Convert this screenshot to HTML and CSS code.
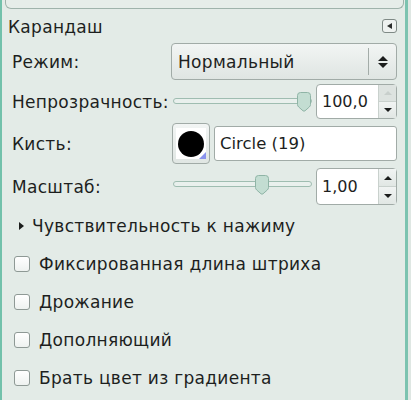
FILE: index.html
```html
<!DOCTYPE html>
<html lang="ru">
<head>
<meta charset="utf-8">
<link rel="stylesheet" href="styles.css">
</head>
<body>
<div class="panel">
  <div class="prev-frame"></div>
  <div class="title-row">
    <span class="title">Карандаш</span>
    <span class="menu-btn"><span class="tri-left"></span></span>
  </div>
  <div class="form">
    <div class="label">Режим:</div>
    <div class="combo">
      <span class="combo-text">Нормальный</span>
      <span class="combo-sep"></span>
      <span class="combo-arrows"><span class="tri-up"></span><span class="tri-down"></span></span>
    </div>

    <div class="label">Непрозрачность:</div>
    <div class="slider-row">
      <div class="slider">
        <div class="track"></div>
        <svg class="handle" style="left: 124px" width="14" height="20" viewBox="0 0 14 20"><path d="M3.5 0.5 H10.5 Q13.5 0.5 13.5 3.5 V12.5 Q13.5 14 12.3 15 L8 18.8 Q7 19.5 6 18.8 L1.7 15 Q0.5 14 0.5 12.5 V3.5 Q0.5 0.5 3.5 0.5 Z" fill="#c3ddd2" stroke="#8fb4a6"/></svg>
      </div>
      <div class="spin">
        <span class="spin-text">100,0</span>
        <span class="spin-btns">
          <span class="spin-btn disabled"><span class="tri-up small"></span></span>
          <span class="spin-btn"><span class="tri-down small"></span></span>
        </span>
      </div>
    </div>

    <div class="label">Кисть:</div>
    <div class="brush-row">
      <div class="brush-btn">
        <div class="brush-preview">
          <div class="brush-dot"></div>
          <div class="brush-corner"></div>
        </div>
      </div>
      <div class="entry">Circle (19)</div>
    </div>

    <div class="label">Масштаб:</div>
    <div class="slider-row scale-row">
      <div class="slider">
        <div class="track"></div>
        <svg class="handle" style="left: 82px" width="14" height="20" viewBox="0 0 14 20"><path d="M3.5 0.5 H10.5 Q13.5 0.5 13.5 3.5 V12.5 Q13.5 14 12.3 15 L8 18.8 Q7 19.5 6 18.8 L1.7 15 Q0.5 14 0.5 12.5 V3.5 Q0.5 0.5 3.5 0.5 Z" fill="#c3ddd2" stroke="#8fb4a6"/></svg>
      </div>
      <div class="spin">
        <span class="spin-text">1,00</span>
        <span class="spin-btns">
          <span class="spin-btn"><span class="tri-up small"></span></span>
          <span class="spin-btn"><span class="tri-down small"></span></span>
        </span>
      </div>
    </div>
  </div>

  <div class="opt-row expander"><span class="tri-right"></span><span>Чувствительность к нажиму</span></div>
  <div class="opt-row"><span class="check"></span><span>Фиксированная длина штриха</span></div>
  <div class="opt-row"><span class="check"></span><span>Дрожание</span></div>
  <div class="opt-row"><span class="check"></span><span>Дополняющий</span></div>
  <div class="opt-row"><span class="check"></span><span>Брать цвет из градиента</span></div>
</div>
</body>
</html>
```
FILE: styles.css
```css
html, body {
  margin: 0;
  padding: 0;
  background: #dfe7e3;
}
body {
  font-family: "DejaVu Sans", sans-serif;
  font-size: 17px;
  letter-spacing: 0.3px;
  color: #1d1f1e;
}
.panel {
  box-sizing: border-box;
  width: 408px;
  height: 400px;
  background: #e3ebe7;
  border-left: 2px solid #72c1ab;
  border-right: 3px solid #7cc3b0;
  overflow: hidden;
}
.prev-frame {
  box-sizing: border-box;
  height: 9px;
  margin: 0 1px 0 3px;
  border: 1px solid #9fb3ab;
  border-top: none;
  border-radius: 0 0 6px 6px;
  background: #e6ede9;
}
.title-row {
  height: 34px;
  display: flex;
  align-items: center;
  justify-content: space-between;
  padding: 0 8px 0 6px;
}
.title {
  margin-top: 1px;
}
.menu-btn {
  box-sizing: border-box;
  width: 15px;
  height: 14px;
  border: 1px solid #7f8a86;
  border-radius: 3px;
  background: #eef2f0;
  display: flex;
  align-items: center;
  justify-content: center;
}
.tri-left {
  width: 0; height: 0;
  border-top: 3.5px solid transparent;
  border-bottom: 3.5px solid transparent;
  border-right: 5px solid #2a2d2c;
  margin-left: -1px;
}
.form {
  display: grid;
  grid-template-columns: 159px 226px;
  grid-template-rows: 37px 35px 41px 37px;
  row-gap: 4px;
  padding-left: 10px;
}
.label {
  display: flex;
  align-items: center;
  white-space: nowrap;
}
.combo {
  box-sizing: border-box;
  border: 1px solid #a1aba7;
  border-radius: 4px;
  background: linear-gradient(#f2f5f4, #dfe5e2);
  display: flex;
  align-items: center;
  padding-left: 6px;
}
.combo-text { flex: 1; }
.combo-sep {
  width: 1px;
  height: 27px;
  background: #a3aca8;
  margin-right: 8px;
}
.combo-arrows {
  width: 11px;
  display: flex;
  flex-direction: column;
  align-items: center;
  gap: 2px;
  margin-right: 8px;
}
.tri-up {
  width: 0; height: 0;
  border-left: 5px solid transparent;
  border-right: 5px solid transparent;
  border-bottom: 5px solid #1b1d1c;
}
.tri-down {
  width: 0; height: 0;
  border-left: 5px solid transparent;
  border-right: 5px solid transparent;
  border-top: 5px solid #1b1d1c;
}
.tri-up.small {
  border-left-width: 4px;
  border-right-width: 4px;
  border-bottom-width: 4px;
}
.tri-down.small {
  border-left-width: 4px;
  border-right-width: 4px;
  border-top-width: 4px;
}
.slider-row {
  display: flex;
  align-items: center;
}
.slider {
  position: relative;
  width: 140px;
  height: 100%;
  margin-left: 2px;
}
.track {
  position: absolute;
  left: 0;
  right: 1px;
  top: 14px;
  height: 6px;
  box-sizing: border-box;
  border: 1px solid #9fbdb1;
  border-radius: 3px;
  background: #e9f0ed;
}
.scale-row .track { top: 13px; }
.handle {
  position: absolute;
  top: 8px;
  display: block;
}
.scale-row .handle { top: 7px; }
.spin {
  box-sizing: border-box;
  width: 81px;
  height: 100%;
  margin-left: 3px;
  border: 1px solid #a1aba7;
  border-radius: 4px;
  background: #ffffff;
  display: flex;
}
.spin-text {
  flex: 1;
  display: flex;
  align-items: center;
  padding-left: 5px;
  font-size: 16px;
  letter-spacing: 0;
}
.spin-btns {
  width: 17px;
  display: flex;
  flex-direction: column;
  border-left: 1px solid #c9d1cd;
}
.spin-btn {
  flex: 1;
  display: flex;
  align-items: center;
  justify-content: center;
  background: linear-gradient(#f1f4f3, #e1e7e4);
}
.spin-btn + .spin-btn { border-top: 1px solid #c9d1cd; }
.spin-btn.disabled .tri-up { border-bottom-color: #c8cfcc; }
.spin-btn.disabled { background: #dde3e0; }
.brush-row {
  display: flex;
  align-items: center;
  gap: 4px;
}
.brush-btn {
  box-sizing: border-box;
  width: 38px;
  height: 41px;
  margin-left: 1px;
  border: 1px solid #a1aba7;
  border-radius: 4px;
  background: linear-gradient(#f2f5f4, #e0e6e3);
  display: flex;
  align-items: center;
  justify-content: center;
}
.brush-preview {
  position: relative;
  width: 30px;
  height: 31px;
  background: #ffffff;
  display: flex;
  align-items: center;
  justify-content: center;
}
.brush-dot {
  width: 26px;
  height: 26px;
  border-radius: 50%;
  background: #000;
}
.brush-corner {
  position: absolute;
  right: 0;
  bottom: 0;
  width: 0; height: 0;
  border-left: 7px solid transparent;
  border-bottom: 7px solid #8a93ee;
}
.entry {
  box-sizing: border-box;
  flex: 1;
  height: 35px;
  border: 1px solid #a1aba7;
  border-radius: 3px;
  background: #ffffff;
  display: flex;
  align-items: center;
  padding-left: 5px;
  font-size: 16.5px;
  letter-spacing: 0;
}
.opt-row {
  height: 38px;
  display: flex;
  align-items: center;
  padding-left: 12px;
  gap: 9px;
}
.expander {
  margin-top: 2px;
  padding-left: 17px;
  gap: 8px;
}
.tri-right {
  width: 0; height: 0;
  border-top: 4px solid transparent;
  border-bottom: 4px solid transparent;
  border-left: 5px solid #1b1d1c;
}
.check {
  box-sizing: border-box;
  width: 16px;
  height: 16px;
  border: 1px solid #8e9995;
  border-radius: 3px;
  background: linear-gradient(#ffffff, #eef2f0);
}
```
